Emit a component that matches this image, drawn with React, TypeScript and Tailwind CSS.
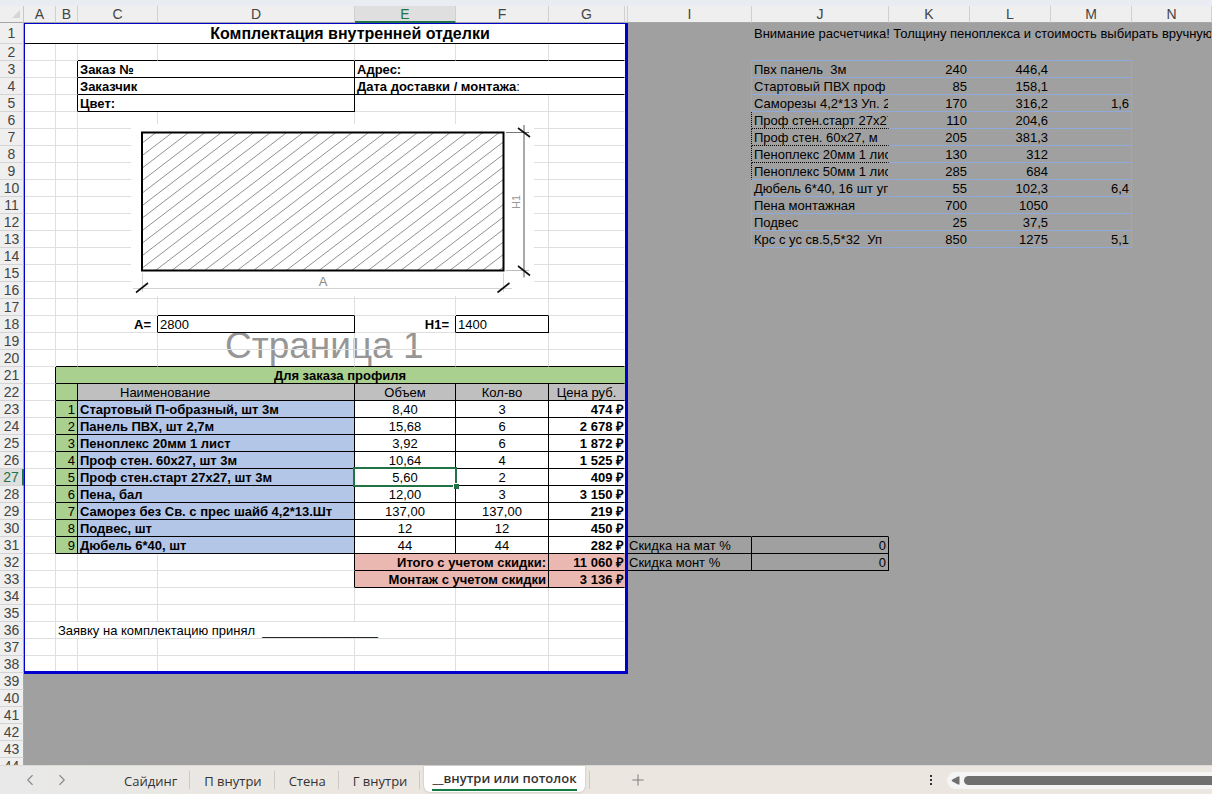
import { clsx } from "clsx";
import { ChevronLeft, ChevronRight, Plus } from "lucide-react";

type Line = "grid" | "black" | "blue" | "dots" | "none";

interface Cell {
  text: string;
  span?: number;
  className?: string;
}

const columns = [
  { name: "A", width: "w-[32px]" },
  { name: "B", width: "w-[22px]" },
  { name: "C", width: "w-[80px]" },
  { name: "D", width: "w-[197px]" },
  { name: "E", width: "w-[101px]" },
  { name: "F", width: "w-[93px]" },
  { name: "G", width: "w-[76px]" },
  { name: "H", width: "w-[3px]" },
  { name: "I", width: "w-[124px]" },
  { name: "J", width: "w-[137px]" },
  { name: "K", width: "w-[81px]" },
  { name: "L", width: "w-[81px]" },
  { name: "M", width: "w-[81px]" },
  { name: "N", width: "w-auto" },
];

const names = columns.map((c) => c.name).join("");
const ROWS = 44;
const PAGE_LAST_ROW = 38;
const ACTIVE = { col: "E", row: 27 };

const rightLine: Record<Line, string> = {
  grid: "border-r-[#dfdfdf]",
  black: "border-r-black",
  blue: "border-r-[#8ea9db]",
  dots: "border-r-black border-dotted",
  none: "border-r-transparent",
};

const bottomLine: Record<Line, string> = {
  grid: "border-b-[#dfdfdf]",
  black: "border-b-black",
  blue: "border-b-[#8ea9db]",
  dots: "border-b-black border-dotted",
  none: "border-b-transparent",
};

const items = [
  ["Стартовый П-образный, шт 3м", "8,40", "3", "474 ₽"],
  ["Панель ПВХ, шт 2,7м", "15,68", "6", "2 678 ₽"],
  ["Пеноплекс 20мм 1 лист", "3,92", "6", "1 872 ₽"],
  ["Проф стен. 60x27, шт 3м", "10,64", "4", "1 525 ₽"],
  ["Проф стен.старт 27x27, шт 3м", "5,60", "2", "409 ₽"],
  ["Пена, бал", "12,00", "3", "3 150 ₽"],
  ["Саморез без Св. с прес шайб 4,2*13.Шт", "137,00", "137,00", "219 ₽"],
  ["Подвес, шт", "12", "12", "450 ₽"],
  ["Дюбель 6*40, шт", "44", "44", "282 ₽"],
];

const prices = [
  ["Пвх панель  3м", "240", "446,4", ""],
  ["Стартовый ПВХ проф 3", "85", "158,1", ""],
  ["Саморезы 4,2*13 Уп. 2", "170", "316,2", "1,6"],
  ["Проф стен.старт 27x27", "110", "204,6", ""],
  ["Проф стен. 60x27, м", "205", "381,3", ""],
  ["Пеноплекс 20мм 1 лис", "130", "312", ""],
  ["Пеноплекс 50мм 1 лис", "285", "684", ""],
  ["Дюбель 6*40, 16 шт уп", "55", "102,3", "6,4"],
  ["Пена монтажная", "700", "1050", ""],
  ["Подвес", "25", "37,5", ""],
  ["Крс с ус св.5,5*32  Уп", "850", "1275", "5,1"],
];

const cells: Record<string, Cell> = {
  A1: {
    text: "Комплектация внутренней отделки",
    span: 7,
    className: "pl-[52px] text-center text-base leading-[18px] font-bold",
  },
  J1: {
    text: "Внимание расчетчика! Толщину пеноплекса и стоимость выбирать вручную!",
    span: 5,
    className: "overflow-hidden px-0.5",
  },
  C3: { text: "Заказ №", span: 2, className: "px-0.5 font-bold" },
  E3: { text: "Адрес:", span: 3, className: "px-0.5 font-bold" },
  C4: { text: "Заказчик", span: 2, className: "px-0.5 font-bold" },
  E4: { text: "Дата доставки / монтажа:", span: 3, className: "px-0.5 font-bold" },
  C5: { text: "Цвет:", span: 2, className: "px-0.5 font-bold" },
  C18: { text: "A=", className: "pr-1.5 text-right font-bold" },
  D18: { text: "2800", className: "px-0.5" },
  E18: { text: "H1=", className: "pr-1.5 text-right font-bold" },
  F18: { text: "1400", className: "px-0.5" },
  B21: {
    text: "Для заказа профиля",
    span: 6,
    className: "bg-[#a9d08e] text-center font-bold",
  },
  B22: { text: "", className: "bg-[#a9d08e]" },
  C22: { text: "Наименование", span: 2, className: "bg-[#bfbfbf] pl-[42px]" },
  E22: { text: "Объем", className: "bg-[#bfbfbf] text-center" },
  F22: { text: "Кол-во", className: "bg-[#bfbfbf] text-center" },
  G22: { text: "Цена руб.", className: "bg-[#bfbfbf] text-center" },
  I31: { text: "Скидка на мат %", className: "pl-px" },
  J31: { text: "0", className: "px-0.5 text-right" },
  I32: { text: "Скидка монт %", className: "pl-px" },
  J32: { text: "0", className: "px-0.5 text-right" },
  E32: {
    text: "Итого с учетом скидки:",
    span: 2,
    className: "bg-[#ebb8b1] px-0.5 text-right font-bold",
  },
  G32: { text: "11 060 ₽", className: "bg-[#ebb8b1] text-right font-bold" },
  E33: {
    text: "Монтаж с учетом скидки",
    span: 2,
    className: "bg-[#ebb8b1] px-0.5 text-right font-bold",
  },
  G33: { text: "3 136 ₽", className: "bg-[#ebb8b1] text-right font-bold" },
  B36: {
    text: "Заявку на комплектацию принял  ________________",
    span: 4,
    className: "px-0.5",
  },
};

items.forEach(([name, volume, count, price], i) => {
  const row = 23 + i;
  cells[`B${row}`] = { text: `${i + 1}`, className: "bg-[#a9d08e] px-0.5 text-right" };
  cells[`C${row}`] = { text: name, span: 2, className: "bg-[#b4c6e7] px-0.5 font-bold" };
  cells[`E${row}`] = { text: volume, className: "text-center" };
  cells[`F${row}`] = { text: count, className: "text-center" };
  cells[`G${row}`] = { text: price, className: "text-right font-bold" };
});

prices.forEach(([name, cost, price, extra], i) => {
  const row = 3 + i;
  cells[`J${row}`] = { text: name, className: "overflow-hidden pl-0.5" };
  cells[`K${row}`] = { text: cost, className: "px-0.5 text-right" };
  cells[`L${row}`] = { text: price, className: "px-0.5 text-right" };
  cells[`M${row}`] = { text: extra, className: "px-0.5 text-right" };
});

const right: Record<string, Line> = {};
const bottom: Record<string, Line> = {};

// rule(right, "A", "C", 1, 5, "black") draws one side of every cell in A1:C5
function rule(side: Record<string, Line>, c1: string, c2: string, r1: number, r2: number, line: Line) {
  for (let c = names.indexOf(c1); c <= names.indexOf(c2); c++) {
    for (let r = r1; r <= r2; r++) side[`${names[c]}${r}`] = line;
  }
}

rule(bottom, "A", "G", 1, 1, "black");
rule(bottom, "C", "G", 2, 4, "black");
rule(bottom, "C", "D", 5, 5, "black");
rule(bottom, "D", "D", 17, 18, "black");
rule(bottom, "F", "F", 17, 18, "black");
rule(bottom, "B", "G", 20, 31, "black");
rule(bottom, "E", "G", 32, 33, "black");
rule(bottom, "I", "J", 30, 32, "black");
rule(bottom, "J", "M", 2, 13, "blue");
rule(bottom, "J", "J", 6, 8, "dots");

rule(right, "B", "B", 3, 5, "black");
rule(right, "D", "D", 3, 5, "black");
rule(right, "C", "F", 18, 18, "black");
rule(right, "A", "A", 21, 31, "black");
rule(right, "B", "B", 22, 31, "black");
rule(right, "D", "D", 22, 33, "black");
rule(right, "E", "E", 22, 31, "black");
rule(right, "F", "F", 22, 33, "black");
rule(right, "I", "J", 31, 32, "black");
rule(right, "I", "I", 3, 13, "blue");
rule(right, "I", "I", 6, 9, "dots");
rule(right, "M", "M", 3, 13, "blue");
rule(right, "G", "G", 1, PAGE_LAST_ROW, "none");

const tabs = ["Сайдинг", "П внутри", "Стена", "Г внутри"];

export default function App() {
  return (
    <div className="flex h-screen flex-col overflow-hidden bg-[#a0a0a0] font-['Liberation_Sans',Arial,sans-serif] text-[13px] text-black">
      <div className="h-1.5 shrink-0 bg-[#e9ecf2]" />
      <main className="relative min-h-0 flex-1 overflow-hidden">
        <div className="absolute top-[17px] left-6 h-[651px] w-[604px] bg-white">
          <span className="absolute top-[301px] left-[201px] text-[37px] leading-[44px] whitespace-nowrap text-[#969696]">
            Страница 1
          </span>
        </div>
        <Sheet />
        <WallDrawing />
        <div className="pointer-events-none absolute top-[17px] left-6 h-[651px] w-[604px] border-t border-r-3 border-b-3 border-l border-[#0000cc]" />
      </main>
      <SheetTabs />
    </div>
  );
}

function Sheet() {
  return (
    <table className="relative w-full table-fixed border-separate border-spacing-0">
      <colgroup>
        <col className="w-6" />
        {columns.map((c) => (
          <col key={c.name} className={c.width} />
        ))}
      </colgroup>
      <thead>
        <tr className="h-[17px] bg-[#efefef] text-sm text-[#444]">
          <th className="border-r border-b border-r-[#c8c8c8] border-b-[#a6a6a6] p-0">
            <svg className="ml-[11px] block" width="10" height="9" viewBox="0 0 10 9">
              <path d="M9 0v8H1z" fill="#d5d5d5" />
            </svg>
          </th>
          {columns.map(({ name }) => (
            <th
              key={name}
              scope="col"
              className={clsx(
                "border-r border-r-[#d0d0d0] px-0 pb-0 font-normal",
                name === ACTIVE.col
                  ? "border-b-2 border-b-[#217346] bg-[#dfdfdf] pt-px leading-[14px] text-[#217346]"
                  : "border-b border-b-[#a6a6a6] pt-0 leading-4",
              )}
            >
              {name === "H" ? null : name}
            </th>
          ))}
        </tr>
      </thead>
      <tbody>
        {Array.from({ length: ROWS }, (_, i) => (
          <SheetRow key={i} row={i + 1} />
        ))}
      </tbody>
    </table>
  );
}

function SheetRow({ row }: { row: number }) {
  const tds = [];
  for (let c = 0; c < names.length; ) {
    const key = `${names[c]}${row}`;
    const cell = cells[key];
    const span = cell?.span ?? 1;
    const last = names[c + span - 1];
    const base: Line = c < 7 && row <= PAGE_LAST_ROW ? "grid" : "none";
    const active = names[c] === ACTIVE.col && row === ACTIVE.row;
    tds.push(
      <td
        key={key}
        colSpan={span}
        className={clsx(
          "border-r border-b pt-0.5 pb-0 whitespace-pre",
          rightLine[right[`${last}${row}`] ?? base],
          bottomLine[bottom[key] ?? base],
          active && "relative",
          cell?.className ?? "px-0",
        )}
      >
        {key === "E4" ? (
          <>
            Дата доставки / монтажа<span className="font-normal">:</span>
          </>
        ) : (
          cell?.text
        )}
        {active && (
          <span className="absolute -inset-0.5 border-2 border-[#217346]">
            <span className="absolute -right-1 -bottom-1 size-1.5 border-t border-l border-white bg-[#217346]" />
          </span>
        )}
      </td>,
    );
    c += span;
  }

  return (
    <tr className={row === 1 ? "h-[21px] leading-[18px]" : "h-[17px] leading-[14px]"}>
      <th
        scope="row"
        className={clsx(
          "border-b border-b-[#d4d4d4] p-0 text-center text-sm font-normal",
          row === 1 ? "leading-5" : "leading-4",
          row === ACTIVE.row
            ? "border-r-2 border-r-[#217346] bg-[#dfdfdf] text-[#217346]"
            : "border-r border-r-[#a6a6a6] bg-[#efefef] text-[#444]",
        )}
      >
        {row}
      </th>
      {tds}
    </tr>
  );
}

function WallDrawing() {
  return (
    <svg
      className="absolute top-[118px] left-[131px] bg-white"
      width="403"
      height="172"
      viewBox="0 0 403 172"
      fill="none"
    >
      <clipPath id="wall">
        <rect x="11" y="8.5" width="361" height="138" />
      </clipPath>
      <g clipPath="url(#wall)" stroke="#858585" strokeWidth="0.9">
        {Array.from({ length: 34 }, (_, i) => (
          <path key={i} d={`M${25 + i * 16.35} 8.5l-180.4 138`} />
        ))}
      </g>
      <rect x="11" y="8.5" width="361.5" height="138" stroke="#000" strokeWidth="2" />
      <path d="M2 164.5h379M11.5 149v19M372.5 149v19" stroke="#d2d2d2" />
      <path d="M393 1v152.5" stroke="#aaa" strokeWidth="2" />
      <path d="M375 8.5h23" stroke="#777" />
      <path d="M375 146.5h23" stroke="#bbb" />
      <path
        d="M5 168.5l12-9.500M366.500 168.500l12-9.500M387 4l12 9M387 142l12 9.500"
        stroke="#111"
        strokeWidth="1.6"
      />
      <text x="192" y="162" textAnchor="middle" fontSize="13" fill="#888">
        A
      </text>
      <text
        transform="rotate(-90 389 78)"
        x="389"
        y="78"
        textAnchor="middle"
        fontSize="11"
        fill="#999"
      >
        H1
      </text>
    </svg>
  );
}

function SheetTabs() {
  return (
    <footer className="flex h-[29px] shrink-0 items-stretch border-t border-[#dcdad6] bg-linear-to-r from-[#e9e9e9] to-[#ebe6df] to-30% pl-3.5 font-['Open_Sans','Noto_Sans',sans-serif] text-[13px] text-[#333]">
      <button type="button" aria-label="Предыдущий лист" className="flex w-8 items-center justify-center">
        <ChevronLeft size={18} strokeWidth={1.5} color="#8a8a8a" />
      </button>
      <button type="button" aria-label="Следующий лист" className="mr-8 flex w-8 items-center justify-center">
        <ChevronRight size={18} strokeWidth={1.5} color="#8a8a8a" />
      </button>
      {tabs.map((tab) => (
        <div key={tab} className="flex items-center">
          <button type="button" className="pt-1 pr-3 pl-3.5 whitespace-nowrap">
            {tab}
          </button>
          <span className="h-[18px] w-px bg-[#cccac6]" />
        </div>
      ))}
      <button
        type="button"
        className="mx-1 mb-0.5 flex items-start rounded-b-md bg-white px-2 font-semibold whitespace-nowrap shadow-[0_0_2px_#aaa]"
      >
        <span className="border-b-2 border-[#107c41] pt-0.5 leading-[21px]">__внутри или потолок</span>
      </button>
      <span className="h-[18px] w-px self-center bg-[#cccac6]" />
      <button type="button" aria-label="Новый лист" className="ml-9 flex w-6 items-center justify-center">
        <Plus size={18} strokeWidth={1.2} color="#777" />
      </button>
      <div className="ml-auto flex w-[290px] items-center">
        <button type="button" aria-label="Меню" className="flex w-[17px] justify-center">
          <svg width="2" height="10" viewBox="0 0 2 10" fill="#333">
            <path d="M0 0h2v2H0zM0 4h2v2H0zM0 8h2v2H0z" />
          </svg>
        </button>
        <div className="ml-2 flex h-[17px] flex-1 items-center gap-1 rounded-l-full bg-[#f5f5f5] pl-1">
          <button type="button" aria-label="Прокрутить влево">
            <svg width="9" height="9" viewBox="0 0 9 9" fill="#6f6f6f">
              <path d="M8.500 .5v8H7L1 5.200a1 1 0 0 1 0-1.400L7 .5z" />
            </svg>
          </button>
          <span className="h-[9px] flex-1 rounded-l-full bg-[#6f6f6f]" />
        </div>
      </div>
    </footer>
  );
}
